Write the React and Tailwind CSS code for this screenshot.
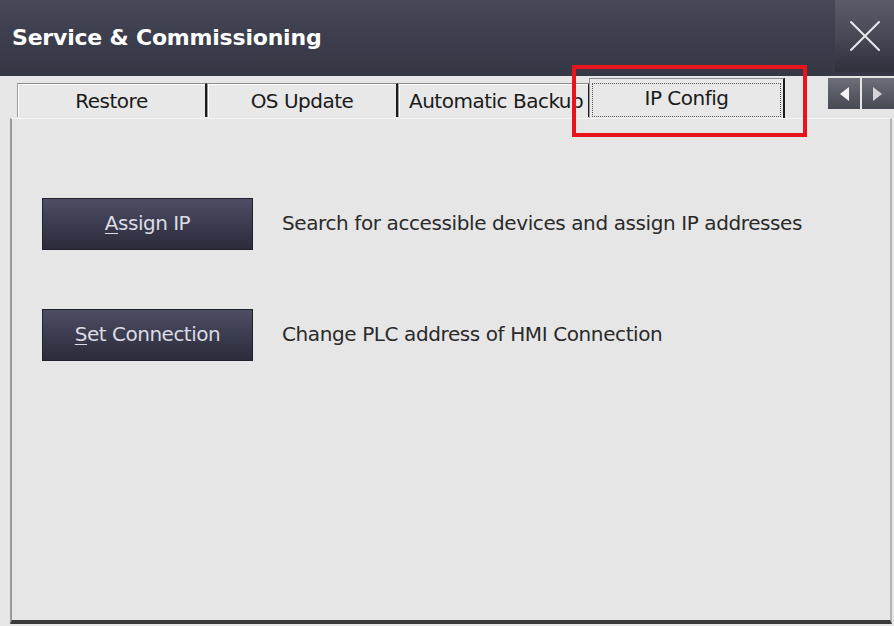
import { useState } from 'react';

const tabs = ['Restore', 'OS Update', 'Automatic Backup', 'IP Config'];

const actions = [
  { key: 'A', rest: 'ssign IP', text: 'Search for accessible devices and assign IP addresses' },
  { key: 'S', rest: 'et Connection', text: 'Change PLC address of HMI Connection' },
];

function Tab({ label, active, width, onClick }) {
  if (active) {
    return (
      <button
        onClick={onClick}
        className="relative -ml-[1px] h-[40px] bg-[#e8e8e8] border-t border-l border-t-[#8c8c8c] border-l-[#9a9a9a] border-r-2 border-r-[#1c1c1c] px-[2px] pt-[4px] pb-[1px]"
        style={{ width }}
      >
        <div className="h-full border border-dotted border-[#555] flex items-center justify-center text-[20px] text-[#1a1a1a] tracking-[-0.5px] pb-[5px]">
          {label}
        </div>
      </button>
    );
  }
  // long labels start at the left edge and get cut off by the border
  return (
    <button
      onClick={onClick}
      className="h-[34px] mb-[1px] px-[10px] bg-[#e8e8e8] border-t border-l border-t-[#8c8c8c] border-l-[#9a9a9a] border-r-2 border-r-[#1c1c1c] shadow-[inset_1px_1px_0_#ffffff] overflow-hidden whitespace-nowrap text-[20px] text-[#1a1a1a] tracking-[-0.5px] flex items-center justify-center-safe"
      style={{ width }}
    >
      <span className="shrink-0">{label}</span>
    </button>
  );
}

export default function App() {
  const [current, setCurrent] = useState(3);
  const widths = [190, 191, 192, 196];

  return (
    <div className="w-[894px] h-[626px] bg-[#e6e6e6] flex flex-col overflow-hidden" style={{ fontFamily: '"DejaVu Sans", Tahoma, sans-serif' }}>
      {/* title bar */}
      <div className="h-[76px] shrink-0 flex items-start bg-gradient-to-b from-[#474959] via-[#3c3e4d] to-[#353745]">
        <div className="flex-1 h-[76px] flex items-center pl-[12px] pb-[2px] text-white font-bold text-[22px] tracking-[-0.2px]">
          Service &amp; Commissioning
        </div>
        <button className="w-[59px] h-[72px] bg-gradient-to-b from-[#5a5c6a] via-[#474957] to-[#2e303c] flex items-center justify-center">
          <svg width="32" height="32" viewBox="0 0 32 32" fill="none" stroke="#e8e8ee" strokeWidth="2" strokeLinecap="round">
            <path d="M2 2 L30 30 M30 2 L2 30" />
          </svg>
        </button>
      </div>

      {/* tab strip */}
      <div className="relative h-[42px] shrink-0 flex items-end pl-[17px]">
        {tabs.map((t, i) => (
          <Tab key={t} label={t} active={i === current} width={widths[i]} onClick={() => setCurrent(i)} />
        ))}
        <div className="ml-auto mb-[9px] flex gap-[2px]">
          <button className="w-[32px] h-[31px] bg-gradient-to-b from-[#6c6e78] to-[#474953] flex items-center justify-center">
            <svg width="12" height="16" viewBox="0 0 12 16"><path d="M11 1 L2 8 L11 15 Z" fill="#f4f4f4" /></svg>
          </button>
          <button className="w-[32px] h-[31px] bg-gradient-to-b from-[#6c6e78] to-[#474953] flex items-center justify-center">
            <svg width="12" height="16" viewBox="0 0 12 16"><path d="M1 1 L10 8 L1 15 Z" fill="#d4d4d8" /></svg>
          </button>
        </div>

        {/* highlight frame around the IP Config tab */}
        <div className="absolute left-[572px] top-[-11px] w-[235px] h-[72px] border-[4px] border-[#e8141c] pointer-events-none z-10" />
      </div>

      {/* tab page */}
      <div className="flex-1 ml-[10px] mr-[2px] mb-[2px] bg-[#e6e6e6] border-l-2 border-l-[#9a9a9a] border-r-2 border-r-[#b4b4b4] border-b-4 border-b-[#3a3a3a] border-t border-t-[#f4f4f4] pt-[79px] pl-[30px] flex flex-col gap-[59px]">
        {actions.map((a) => (
          <div key={a.key} className="flex items-center gap-[29px]">
            <button className="w-[211px] h-[52px] bg-gradient-to-b from-[#4d4d64] via-[#3c3c50] to-[#2b2b3a] border border-[#22222c] text-[#dcdce4] text-[20px] tracking-[-0.5px] flex items-center justify-center pb-[2px]">
              <span className="underline underline-offset-[3px] decoration-1">{a.key}</span>
              {a.rest}
            </button>
            <span className="text-[20px] text-[#2a2a2a] tracking-[-0.4px] pb-[2px]">{a.text}</span>
          </div>
        ))}
      </div>
    </div>
  );
}
